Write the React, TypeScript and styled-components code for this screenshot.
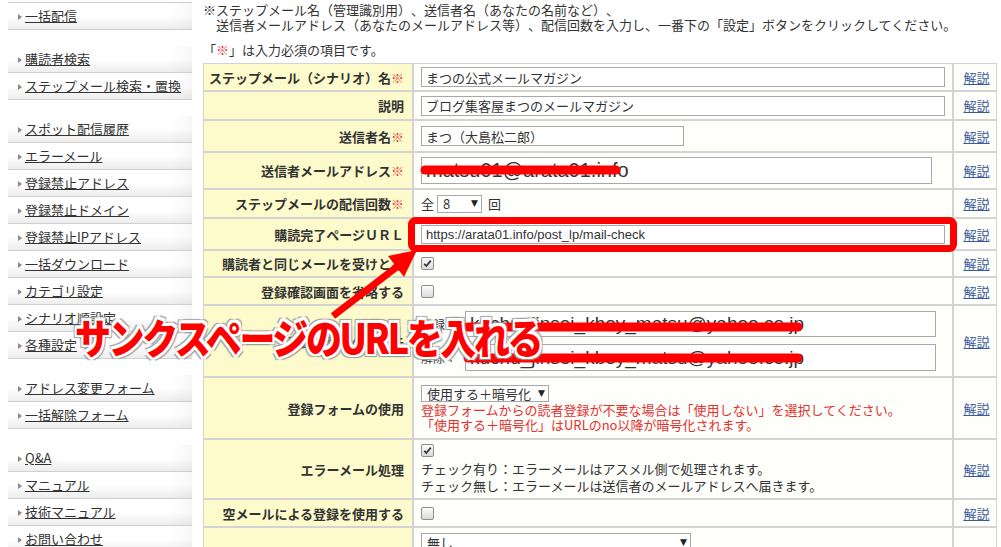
import React from 'react';
import styled, { createGlobalStyle } from 'styled-components';

const GlobalStyle = createGlobalStyle`
  html, body { margin: 0; padding: 0; background: #fff; }
  body {
    font-family: "Noto Sans CJK JP", "Liberation Sans", sans-serif;
    font-size: 13px;
    color: #333;
    overflow: hidden;
    text-spacing-trim: space-all;
  }
  * { text-spacing-trim: space-all; }
`;

const Page = styled.div`
  position: relative;
  width: 1001px;
  height: 547px;
  overflow: hidden;
  display: flex;
  align-items: flex-start;
`;

/* ---------- Sidebar ---------- */
const Sidebar = styled.nav`
  width: 184px;
  flex-shrink: 0;
  margin-left: 8px;
  margin-top: 2px;
  border-top: 1px solid #cfcfcf;
  display: flex;
  flex-direction: column;
  gap: 16px;
`;

const NavGroup = styled.ul`
  list-style: none;
  margin: 0;
  padding: 0;
`;

const NavItem = styled.li`
  box-sizing: border-box;
  height: 27px;
  display: flex;
  align-items: center;
  padding-left: 10px;
  padding-bottom: 2px;
  border-bottom: 1px solid #cfcfcf;
  background:
    linear-gradient(to right, rgba(255,255,255,0) 88%, rgba(0,0,0,0.03) 100%),
    linear-gradient(to bottom, #ffffff 0%, #ffffff 50%, #ededed 100%);
  &::before {
    content: "";
    width: 0;
    height: 0;
    border-left: 4px solid #8a8a8a;
    border-top: 3px solid transparent;
    border-bottom: 3px solid transparent;
    margin-right: 3px;
    margin-top: 3px;
  }
`;

const NavLink = styled.a`
  color: #333;
  text-decoration: underline;
  font-size: 13px;
  line-height: 15px;
  white-space: nowrap;
`;

/* ---------- Main ---------- */
const Main = styled.main`
  margin-left: 11px;
  padding-top: 2px;
  width: 794px;
  flex-shrink: 0;
`;

const Intro = styled.p`
  margin: 0;
  font-size: 13px;
  line-height: 15px;
  white-space: nowrap;
`;

const Required = styled.p`
  margin: 10px 0 0;
  font-size: 13px;
  line-height: 15px;
`;

const Mark = styled.span`
  color: #f23c3c;
  font-weight: normal;
`;

const FormTable = styled.table`
  margin-top: 6px;
  width: 794px;
  table-layout: fixed;
  border-collapse: separate;
  border-spacing: 0;
`;

const Row = styled.tr<{ $h: number }>`
  height: ${p => p.$h}px;
`;

const LabelCell = styled.th`
  background: #fdfbcc;
  border: 1px solid #d3d3d3;
  text-align: right;
  vertical-align: middle;
  padding: 0 8px 0 4px;
  font-weight: bold;
  font-size: 13px;
  line-height: 15px;
  color: #333;
  white-space: nowrap;
  overflow: hidden;
`;

const ValueCell = styled.td<{ $top?: boolean }>`
  background: #fefefb;
  border: 1px solid #d3d3d3;
  padding: ${p => (p.$top ? '5px 7px 0' : '0 7px')};
  vertical-align: ${p => (p.$top ? 'top' : 'middle')};
  font-size: 13px;
  line-height: 15px;
`;

const HelpCell = styled.td`
  background: #fefefb;
  border: 1px solid #d3d3d3;
  text-align: center;
  vertical-align: middle;
  padding: 0 0 0 3px;
`;

const HelpLink = styled.a`
  color: #3a5a9c;
  text-decoration: underline;
  font-size: 13px;
  line-height: 15px;
`;

const Field = styled.input<{ $w: number; $h: number; $fs?: number }>`
  display: block;
  box-sizing: border-box;
  width: ${p => p.$w}px;
  height: ${p => p.$h}px;
  margin: 0;
  padding: 0 4px;
  border: 1px solid #a9a9a9;
  border-radius: 0;
  background: #fff;
  color: #333;
  font-family: "Liberation Sans", "Noto Sans CJK JP", sans-serif;
  font-size: ${p => p.$fs ?? 13}px;
  outline: none;
`;

const Inline = styled.div<{ $gap?: number }>`
  display: flex;
  align-items: center;
  gap: ${p => p.$gap ?? 4}px;
`;

const Stack = styled.div<{ $gap?: number }>`
  display: flex;
  flex-direction: column;
  align-items: flex-start;
  gap: ${p => p.$gap ?? 0}px;
`;

const SelectBox = styled.span<{ $w: number; $h?: number }>`
  box-sizing: border-box;
  width: ${p => p.$w}px;
  height: ${p => p.$h ?? 18}px;
  display: inline-flex;
  align-items: center;
  justify-content: space-between;
  padding: 0 3px 0 5px;
  border: 1px solid #a9a9a9;
  background: #fff;
  font-size: 13px;
  line-height: 15px;
  color: #333;
  white-space: nowrap;
  &::after {
    content: "▼";
    font-family: "DejaVu Sans", sans-serif;
    font-size: 9px;
    color: #222;
    margin-left: 4px;
  }
`;

const Check = styled.span`
  box-sizing: border-box;
  width: 13px;
  height: 13px;
  display: inline-flex;
  align-items: center;
  justify-content: center;
  border: 1px solid #8e8e8e;
  border-radius: 2px;
  background: linear-gradient(to bottom, #fbfbfb, #dadada);
`;

const Note = styled.div<{ $red?: boolean; $lh?: number }>`
  color: ${p => (p.$red ? '#e5302e' : '#333')};
  font-size: 13px;
  line-height: ${p => p.$lh ?? 15}px;
  white-space: nowrap;
`;

const SmallLabel = styled.span`
  width: 44px;
  font-size: 12px;
  line-height: 15px;
`;

/* ---------- Annotation overlay ---------- */
const Overlay = styled.svg`
  position: absolute;
  left: 0;
  top: 0;
  width: 1001px;
  height: 547px;
  pointer-events: none;
`;

const Caption = styled.div`
  position: absolute;
  left: 75px;
  top: 310px;
  font-family: "Noto Sans CJK JP", sans-serif;
  font-weight: 900;
  font-size: 36px;
  line-height: 44px;
  letter-spacing: -2.4px;
  color: #ff0000;
  white-space: nowrap;
  transform: scaleY(1.15);
  transform-origin: left top;
  pointer-events: none;
  text-shadow:
    -2px -2px 0 #fff, 2px -2px 0 #fff, -2px 2px 0 #fff, 2px 2px 0 #fff,
    0 -2px 0 #fff, 0 2px 0 #fff, -2px 0 0 #fff, 2px 0 0 #fff,
    -3px -3px 1px #9a9a9a, 3px 3px 1px #9a9a9a, 3px -3px 1px #9a9a9a, -3px 3px 1px #9a9a9a;
`;

const CheckMark = () => (
  <svg width="9" height="9" viewBox="0 0 9 9">
    <path d="M1.2 4.8 L3.4 7 L7.8 1.6" fill="none" stroke="#3a3a3a" strokeWidth="1.8" />
  </svg>
);

const navGroups: string[][] = [
  ['一括配信'],
  ['購読者検索', 'ステップメール検索・置換'],
  ['スポット配信履歴', 'エラーメール', '登録禁止アドレス', '登録禁止ドメイン', '登録禁止IPアドレス', '一括ダウンロード', 'カテゴリ設定', 'シナリオ順設定', '各種設定'],
  ['アドレス変更フォーム', '一括解除フォーム'],
  ['Q&A', 'マニュアル', '技術マニュアル', 'お問い合わせ'],
];

const Help = () => (
  <HelpCell>
    <HelpLink href="#">解説</HelpLink>
  </HelpCell>
);

export default function App() {
  return (
    <>
      <GlobalStyle />
      <Page>
        <Sidebar>
          {navGroups.map((g, i) => (
            <NavGroup key={i}>
              {g.map(item => (
                <NavItem key={item}>
                  <NavLink href="#">{item}</NavLink>
                </NavItem>
              ))}
            </NavGroup>
          ))}
        </Sidebar>

        <Main>
          <Intro>※ステップメール名（管理識別用）、送信者名（あなたの名前など）、</Intro>
          <Intro>　送信者メールアドレス（あなたのメールアドレス等）、配信回数を入力し、一番下の「設定」ボタンをクリックしてください。</Intro>
          <Required>「<Mark>※</Mark>」は入力必須の項目です。</Required>

          <FormTable>
            <colgroup>
              <col style={{ width: 210 }} />
              <col style={{ width: 540 }} />
              <col style={{ width: 44 }} />
            </colgroup>
            <tbody>
              <Row $h={28}>
                <LabelCell>ステップメール（シナリオ）名<Mark>※</Mark></LabelCell>
                <ValueCell><Field $w={524} $h={20} readOnly defaultValue="まつの公式メールマガジン" /></ValueCell>
                <Help />
              </Row>
              <Row $h={29}>
                <LabelCell>説明</LabelCell>
                <ValueCell><Field $w={524} $h={20} readOnly defaultValue="ブログ集客屋まつのメールマガジン" /></ValueCell>
                <Help />
              </Row>
              <Row $h={32}>
                <LabelCell>送信者名<Mark>※</Mark></LabelCell>
                <ValueCell><Field $w={263} $h={20} readOnly defaultValue="まつ（大島松二郎）" /></ValueCell>
                <Help />
              </Row>
              <Row $h={37}>
                <LabelCell>送信者メールアドレス<Mark>※</Mark></LabelCell>
                <ValueCell><Field $w={511} $h={27} $fs={20} readOnly defaultValue="matsu01@arata01.info" /></ValueCell>
                <Help />
              </Row>
              <Row $h={29}>
                <LabelCell>ステップメールの配信回数<Mark>※</Mark></LabelCell>
                <ValueCell>
                  <Inline $gap={3}>
                    <span>全</span>
                    <SelectBox $w={45}>8</SelectBox>
                    <span style={{ marginLeft: 3 }}>回</span>
                  </Inline>
                </ValueCell>
                <Help />
              </Row>
              <Row $h={32}>
                <LabelCell>購読完了ページＵＲＬ</LabelCell>
                <ValueCell><Field $w={524} $h={19} readOnly defaultValue="https://arata01.info/post_lp/mail-check" /></ValueCell>
                <Help />
              </Row>
              <Row $h={27}>
                <LabelCell>購読者と同じメールを受けとる</LabelCell>
                <ValueCell><Inline><Check><CheckMark /></Check></Inline></ValueCell>
                <Help />
              </Row>
              <Row $h={28}>
                <LabelCell>登録確認画面を省略する</LabelCell>
                <ValueCell><Inline><Check /></Inline></ValueCell>
                <Help />
              </Row>
              <Row $h={72}>
                <LabelCell>登録・解除の通知先</LabelCell>
                <ValueCell>
                  <Stack $gap={7}>
                    <Inline $gap={0}>
                      <SmallLabel>登録：</SmallLabel>
                      <Field $w={471} $h={26} $fs={19} readOnly defaultValue="kuchu_jinsei_kboy_matsu@yahoo.co.jp" />
                    </Inline>
                    <Inline $gap={0}>
                      <SmallLabel>解除：</SmallLabel>
                      <Field $w={471} $h={27} $fs={19} readOnly defaultValue="kuchu_jinsei_kboy_matsu@yahoo.co.jp" />
                    </Inline>
                  </Stack>
                </ValueCell>
                <Help />
              </Row>
              <Row $h={62}>
                <LabelCell>登録フォームの使用</LabelCell>
                <ValueCell>
                  <Stack>
                    <SelectBox $w={128} $h={17}>使用する＋暗号化</SelectBox>
                    <Note $red>登録フォームからの読者登録が不要な場合は「使用しない」を選択してください。</Note>
                    <Note $red>「使用する＋暗号化」はURLのno以降が暗号化されます。</Note>
                  </Stack>
                </ValueCell>
                <Help />
              </Row>
              <Row $h={60}>
                <LabelCell>エラーメール処理</LabelCell>
                <ValueCell>
                  <Stack $gap={3}>
                    <Check><CheckMark /></Check>
                    <Note $lh={17}>チェック有り：エラーメールはアスメル側で処理されます。</Note>
                    <Note $lh={17} style={{ marginTop: -3 }}>チェック無し：エラーメールは送信者のメールアドレスへ届きます。</Note>
                  </Stack>
                </ValueCell>
                <Help />
              </Row>
              <Row $h={28}>
                <LabelCell>空メールによる登録を使用する</LabelCell>
                <ValueCell><Inline><Check /></Inline></ValueCell>
                <Help />
              </Row>
              <Row $h={44}>
                <LabelCell></LabelCell>
                <ValueCell $top><SelectBox $w={270}>無し</SelectBox></ValueCell>
                <HelpCell />
              </Row>
            </tbody>
          </FormTable>
        </Main>

        <Overlay viewBox="0 0 1001 547">
          <g stroke="#ff0000" strokeLinecap="round" fill="none">
            <line x1="425" y1="170" x2="616" y2="170" strokeWidth="9" />
            <line x1="468" y1="327" x2="798" y2="327" strokeWidth="9" />
            <line x1="468" y1="358" x2="798" y2="358" strokeWidth="9" />
          </g>
          <rect x="411.5" y="220.5" width="542" height="28" rx="4" fill="none" stroke="#ff0000" strokeWidth="7" />
          <line x1="333" y1="316" x2="398" y2="266" stroke="#ff0000" strokeWidth="7" />
          <polygon points="417,250 388,256 404,277" fill="#ff0000" />
        </Overlay>
        <Caption>サンクスページのURLを入れる</Caption>
      </Page>
    </>
  );
}
